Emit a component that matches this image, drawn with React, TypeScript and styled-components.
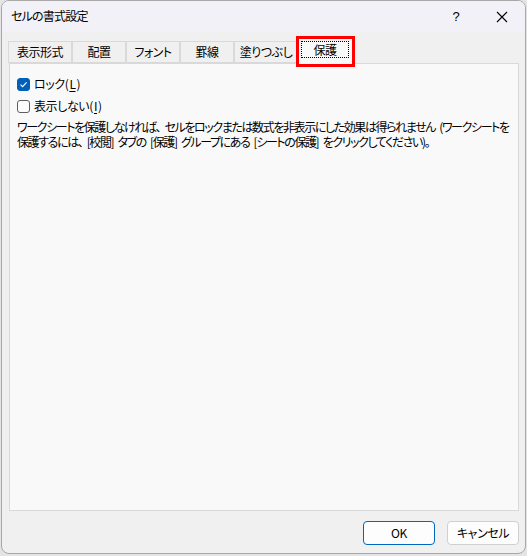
import React from "react";
import styled, { createGlobalStyle } from "styled-components";

const Global = createGlobalStyle`
  html, body { margin: 0; padding: 0; }
  body {
    background: #e4e4e4;
    font-family: "Noto Sans CJK JP", "Noto Sans", sans-serif;
    font-feature-settings: "palt";
    font-size: 12px;
    color: #000;
  }
`;

const Window = styled.div`
  box-sizing: border-box;
  width: 525px;
  height: 554px;
  margin-left: 1px;
  border: 1px solid #a8a8a8;
  border-radius: 8px;
  overflow: hidden;
  background: #f0f0f0;
  display: flex;
  flex-direction: column;
`;

const TitleBar = styled.div`
  height: 31px;
  flex: none;
  background: #f3f1f8;
  display: flex;
  align-items: center;
  padding-left: 9px;
`;

const Title = styled.div`
  flex: 1;
  font-size: 12px;
  line-height: 16px;
  margin-top: -2px;
  letter-spacing: -0.8px;
`;

const CaptionButton = styled.div<{ $w: number }>`
  width: ${(p) => p.$w}px;
  height: 31px;
  display: flex;
  align-items: center;
  justify-content: center;
  font-family: "Liberation Sans", sans-serif;
  font-size: 13px;
`;

const Body = styled.div`
  flex: 1;
  display: flex;
  flex-direction: column;
  padding: 0 6px 0 6px;
`;

const TabStrip = styled.div`
  display: flex;
  align-items: flex-end;
  height: 31px;
`;

const Tab = styled.div<{ $w: number; $selected?: boolean }>`
  position: relative;
  box-sizing: border-box;
  width: ${(p) => p.$w}px;
  height: ${(p) => (p.$selected ? 26 : 22)}px;
  margin: ${(p) => (p.$selected ? "0 -2px -1px -2px" : "0")};
  z-index: ${(p) => (p.$selected ? 2 : 1)};
  background: ${(p) => (p.$selected ? "#f9f9f9" : "#f0f0f0")};
  border: 1px solid #d9d9d9;
  border-bottom: ${(p) => (p.$selected ? "none" : "1px solid #d9d9d9")};
  & + & { border-left: ${(p) => (p.$selected ? "1px solid #d9d9d9" : "none")}; }
  display: flex;
  align-items: center;
  justify-content: center;
  font-size: 12px;
  line-height: 16px;
  letter-spacing: -0.5px;
  white-space: nowrap;
`;

const FocusLabel = styled.span`
  display: inline-block;
  border: 1px dotted #000;
  padding: 0 11px;
  line-height: 15px;
  margin-top: -4px;
`;

const Highlight = styled.div`
  position: absolute;
  left: -1px;
  right: -2px;
  top: -3px;
  bottom: -3px;
  border: 3px solid #ff0000;
  pointer-events: none;
`;

const Panel = styled.div`
  box-sizing: border-box;
  width: 510px;
  height: 448px;
  margin-left: 1px;
  background: #f9f9f9;
  border: 1px solid #d9d9d9;
  padding: 12px 7px 0 7px;
  display: flex;
  flex-direction: column;
`;

const CheckRow = styled.label`
  display: flex;
  align-items: center;
  gap: 4px;
  height: 16px;
  margin-bottom: 6px;
  font-size: 12px;
  line-height: 16px;
  letter-spacing: -0.4px;
`;

const Box = styled.span<{ $checked?: boolean }>`
  box-sizing: border-box;
  width: 13px;
  height: 13px;
  border-radius: 3px;
  border: 1px solid ${(p) => (p.$checked ? "#005fb8" : "#5f5f5f")};
  background: ${(p) => (p.$checked ? "#005fb8" : "#fdfdfd")};
  display: flex;
  align-items: center;
  justify-content: center;
`;

const U = styled.span`
  text-decoration: underline;
  text-underline-offset: 2px;
  margin: 0 1px;
`;

const Note = styled.p`
  margin: 0;
  margin-top: -1px;
  font-size: 12px;
  line-height: 15px;
  letter-spacing: -1.4px;
  word-spacing: 3px;
  white-space: nowrap;
`;

const Footer = styled.div`
  display: flex;
  justify-content: flex-end;
  gap: 12px;
  padding-top: 10px;
`;

const Button = styled.button<{ $primary?: boolean }>`
  box-sizing: border-box;
  width: 72px;
  height: 24px;
  border-radius: 4px;
  background: #fdfdfd;
  border: ${(p) => (p.$primary ? "1.5px solid #0067c0" : "1px solid #d0d0d0")};
  font-family: "Noto Sans CJK JP", "Noto Sans", sans-serif;
  font-feature-settings: "palt";
  font-size: 12px;
  letter-spacing: -0.4px;
  color: #000;
  padding: 0;
  line-height: 16px;
`;

const tabs: { label: string; w: number }[] = [
  { label: "表示形式", w: 64 },
  { label: "配置", w: 54 },
  { label: "フォント", w: 54 },
  { label: "罫線", w: 54 },
  { label: "塗りつぶし", w: 64 },
];

export default function App() {
  return (
    <>
      <Global />
      <Window>
        <TitleBar>
          <Title>セルの書式設定</Title>
          <CaptionButton $w={46}>?</CaptionButton>
          <CaptionButton $w={46}>
            <svg width="12" height="12" viewBox="0 0 12 12">
              <path d="M1 1 L11 11 M11 1 L1 11" stroke="#000" strokeWidth="1.1" fill="none" />
            </svg>
          </CaptionButton>
        </TitleBar>
        <Body>
          <TabStrip>
            {tabs.map((t) => (
              <Tab key={t.label} $w={t.w}>
                {t.label}
              </Tab>
            ))}
            <Tab $w={58} $selected>
              <FocusLabel>保護</FocusLabel>
              <Highlight />
            </Tab>
          </TabStrip>
          <Panel>
            <CheckRow>
              <Box $checked>
                <svg width="9" height="9" viewBox="0 0 9 9">
                  <path d="M1.5 4.6 L3.6 6.6 L7.6 2.4" stroke="#fff" strokeWidth="1.2" fill="none" />
                </svg>
              </Box>
              <span>
                ロック(<U>L</U>)
              </span>
            </CheckRow>
            <CheckRow>
              <Box />
              <span>
                表示しない(<U>I</U>)
              </span>
            </CheckRow>
            <Note>
              ワークシートを保護しなければ、 セルをロックまたは数式を非表示にした効果は得られません (ワークシートを
              <br />
              保護するには、 [校閲] タブの [保護] グループにある [シートの保護] をクリックしてください)。
            </Note>
          </Panel>
          <Footer>
            <Button $primary>OK</Button>
            <Button>キャンセル</Button>
          </Footer>
        </Body>
      </Window>
    </>
  );
}
